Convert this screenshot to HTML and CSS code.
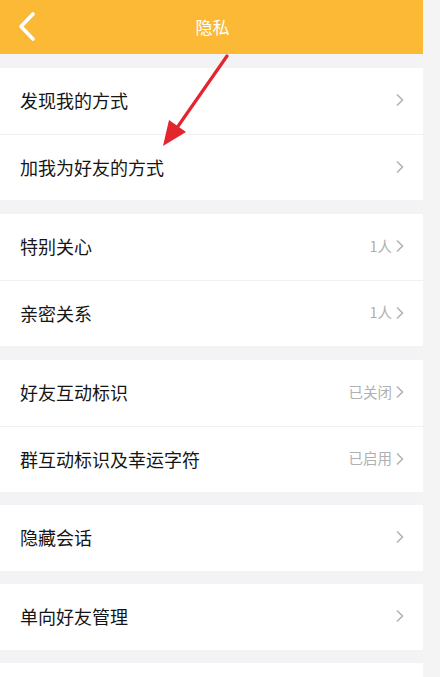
FILE: index.html
```html
<!DOCTYPE html>
<html lang="zh">
<head>
<meta charset="utf-8">
<title>隐私</title>
<link rel="stylesheet" href="styles.css">
</head>
<body>
<div class="page">
  <header class="topbar">
    <svg class="back" width="40" height="54" viewBox="0 0 40 54"><polyline points="33,14 21,26.5 33,39" fill="none" stroke="#fff" stroke-width="3.6" stroke-linecap="round" stroke-linejoin="round"/></svg>
    <div class="title">隐私</div>
  </header>

  <section class="group">
    <div class="row"><span class="label">发现我的方式</span><span class="right"><svg class="chev" width="10" height="14" viewBox="0 0 10 14"><polyline points="2,1.5 7.5,7 2,12.5" fill="none" stroke="#b3b3b3" stroke-width="1.6"/></svg></span></div>
    <div class="row"><span class="label">加我为好友的方式</span><span class="right"><svg class="chev" width="10" height="14" viewBox="0 0 10 14"><polyline points="2,1.5 7.5,7 2,12.5" fill="none" stroke="#b3b3b3" stroke-width="1.6"/></svg></span></div>
  </section>

  <section class="group">
    <div class="row"><span class="label">特别关心</span><span class="right"><span class="value">1人</span><svg class="chev" width="10" height="14" viewBox="0 0 10 14"><polyline points="2,1.5 7.5,7 2,12.5" fill="none" stroke="#b3b3b3" stroke-width="1.6"/></svg></span></div>
    <div class="row"><span class="label">亲密关系</span><span class="right"><span class="value">1人</span><svg class="chev" width="10" height="14" viewBox="0 0 10 14"><polyline points="2,1.5 7.5,7 2,12.5" fill="none" stroke="#b3b3b3" stroke-width="1.6"/></svg></span></div>
  </section>

  <section class="group tight">
    <div class="row"><span class="label">好友互动标识</span><span class="right"><span class="value">已关闭</span><svg class="chev" width="10" height="14" viewBox="0 0 10 14"><polyline points="2,1.5 7.5,7 2,12.5" fill="none" stroke="#b3b3b3" stroke-width="1.6"/></svg></span></div>
    <div class="row"><span class="label">群互动标识及幸运字符</span><span class="right"><span class="value">已启用</span><svg class="chev" width="10" height="14" viewBox="0 0 10 14"><polyline points="2,1.5 7.5,7 2,12.5" fill="none" stroke="#b3b3b3" stroke-width="1.6"/></svg></span></div>
  </section>

  <section class="group tight">
    <div class="row"><span class="label">隐藏会话</span><span class="right"><svg class="chev" width="10" height="14" viewBox="0 0 10 14"><polyline points="2,1.5 7.5,7 2,12.5" fill="none" stroke="#b3b3b3" stroke-width="1.6"/></svg></span></div>
  </section>

  <section class="group tight">
    <div class="row"><span class="label">单向好友管理</span><span class="right"><svg class="chev" width="10" height="14" viewBox="0 0 10 14"><polyline points="2,1.5 7.5,7 2,12.5" fill="none" stroke="#b3b3b3" stroke-width="1.6"/></svg></span></div>
  </section>

  <section class="group">
    <div class="row"></div>
  </section>

  <svg class="annot" width="100" height="100" viewBox="0 0 100 100">
    <line x1="67" y1="2" x2="14" y2="78" stroke="#e3262d" stroke-width="3.2" stroke-linecap="round"/>
    <polygon points="3,92 9,66 26,78" fill="#e3262d"/>
  </svg>
</div>
</body>
</html>
```

FILE: styles.css
```css
html, body {
  margin: 0;
  padding: 0;
  background: #f4f4f5;
  overflow: hidden;
}
body {
  font-family: "Noto Sans CJK SC", "Noto Sans", sans-serif;
}
.page {
  position: relative;
  width: 423px;
  height: 677px;
  background: #f3f3f5;
  overflow: hidden;
}
.topbar {
  position: relative;
  height: 54px;
  background: #fbb935;
  display: flex;
  align-items: center;
  justify-content: center;
  margin-bottom: 14px;
}
.back {
  position: absolute;
  left: 0;
  top: 0;
}
.title {
  color: #fff;
  font-size: 17px;
  line-height: 1;
  padding-left: 2px;
  padding-bottom: 1px;
}
.group {
  background: #fff;
  margin-bottom: 14px;
}
.group.tight {
  margin-bottom: 13px;
}
.row {
  height: 66px;
  display: flex;
  align-items: center;
  justify-content: space-between;
  padding: 0 18px 2px 20px;
  border-top: 1px solid #f1f1f1;
  box-sizing: border-box;
}
.row:first-child {
  border-top: none;
}
.label {
  font-size: 18px;
  color: #151515;
  line-height: 1;
}
.right {
  display: flex;
  align-items: center;
  gap: 3px;
}
.value {
  font-size: 14.5px;
  color: #b0b0b0;
  line-height: 1;
}
.chev {
  display: block;
}
.annot {
  position: absolute;
  left: 160px;
  top: 54px;
}
```
